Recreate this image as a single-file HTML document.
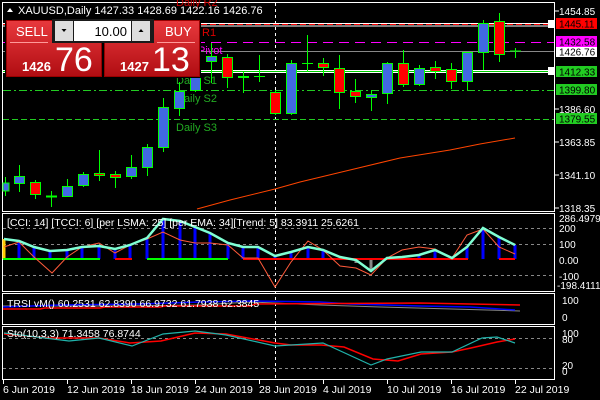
<!DOCTYPE html>
<html><head><meta charset="utf-8"><style>
html,body{margin:0;padding:0;background:#000;width:600px;height:400px;overflow:hidden}
svg{display:block;font-family:"Liberation Sans",sans-serif}
</style></head><body>
<svg width="600" height="400" viewBox="0 0 600 400" xmlns="http://www.w3.org/2000/svg">
<rect width="600" height="400" fill="#000"/>
<g fill="none" stroke="#fff" stroke-width="1">
<rect x="2.5" y="2.5" width="552" height="209"/>
<rect x="2.5" y="213.5" width="552" height="78"/>
<rect x="2.5" y="293.5" width="552" height="31"/>
<rect x="2.5" y="326.5" width="552" height="53"/>
</g>
<line x1="275.5" y1="3" x2="275.5" y2="380" stroke="#fff" stroke-dasharray="3,3"/>
<line x1="3" y1="23.5" x2="554" y2="23.5" stroke="#fff"/>
<line x1="3" y1="24.5" x2="554" y2="24.5" stroke="#f00" stroke-dasharray="6,3"/>
<line x1="3" y1="26" x2="554" y2="26" stroke="#fff"/>
<line x1="3" y1="42.5" x2="554" y2="42.5" stroke="#f0f" stroke-dasharray="10,6"/>
<line x1="3" y1="51.5" x2="554" y2="51.5" stroke="#888"/>
<line x1="3" y1="70.5" x2="554" y2="70.5" stroke="#fff"/>
<line x1="3" y1="71.5" x2="554" y2="71.5" stroke="#0c0"/>
<line x1="3" y1="72.5" x2="554" y2="72.5" stroke="#fff"/>
<line x1="3" y1="90.5" x2="554" y2="90.5" stroke="#2c2" stroke-dasharray="8,3,2,3"/>
<line x1="3" y1="119.5" x2="554" y2="119.5" stroke="#2c2" stroke-dasharray="6,3"/>
<g font-size="11">
<text x="176" y="6" fill="#c00">Daily R2</text>
<text x="202" y="36" fill="#d00">R1</text>
<text x="198" y="54" fill="#f0f">Pivot</text>
<text x="176" y="84" fill="#2a2">Daily S1</text>
<text x="176" y="102" fill="#2a2">Daily S2</text>
<text x="176" y="131" fill="#2a2">Daily S3</text>
</g>
<polyline fill="none" stroke="#ff4500" stroke-width="1" points="197,209 230,200 275,189 300,182 350,170 400,158 450,150 480,144 515,138"/>
<g stroke="#0f0" stroke-width="1">
<line x1="5.5" y1="177" x2="5.5" y2="196"/><rect x="3" y="183" width="6" height="8" fill="#4169e1"/>
<line x1="19.5" y1="165" x2="19.5" y2="192"/><rect x="14.5" y="176.5" width="10" height="7" fill="#4169e1"/>
<line x1="35.5" y1="180" x2="35.5" y2="199"/><rect x="30.5" y="182.5" width="10" height="12" fill="#f00"/>
<line x1="51.5" y1="191" x2="51.5" y2="207"/><line x1="46" y1="196.5" x2="57" y2="196.5" stroke-width="2"/>
<line x1="67.5" y1="179" x2="67.5" y2="197"/><rect x="62.5" y="186.5" width="10" height="10" fill="#4169e1"/>
<line x1="83.5" y1="172" x2="83.5" y2="187"/><rect x="78.5" y="174.5" width="10" height="11" fill="#4169e1"/>
<line x1="99.5" y1="150" x2="99.5" y2="181"/><rect x="94.5" y="173.5" width="10" height="2" fill="#f00"/>
<line x1="115.5" y1="171" x2="115.5" y2="188"/><rect x="110.5" y="174.5" width="10" height="3" fill="#f00"/>
<line x1="131.5" y1="155" x2="131.5" y2="179"/><rect x="126.5" y="167.5" width="10" height="9" fill="#4169e1"/>
<line x1="147.5" y1="144" x2="147.5" y2="176"/><rect x="142.5" y="147.5" width="10" height="20" fill="#4169e1"/>
<line x1="163.5" y1="98" x2="163.5" y2="152"/><rect x="158.5" y="107.5" width="10" height="40" fill="#4169e1"/>
<line x1="179.5" y1="82" x2="179.5" y2="116"/><rect x="174.5" y="91.5" width="10" height="17" fill="#4169e1"/>
<line x1="195.5" y1="58" x2="195.5" y2="92"/><rect x="190.5" y="65.5" width="10" height="25" fill="#4169e1"/>
<line x1="211.5" y1="43" x2="211.5" y2="83"/><rect x="206.5" y="56.5" width="10" height="5" fill="#4169e1"/>
<line x1="227.5" y1="54" x2="227.5" y2="88"/><rect x="222.5" y="57.5" width="10" height="20" fill="#f00"/>
<line x1="243.5" y1="72" x2="243.5" y2="93"/><line x1="238" y1="77" x2="249" y2="77" stroke-width="2"/>
<line x1="259.5" y1="55" x2="259.5" y2="82"/><line x1="254" y1="76.5" x2="265" y2="76.5"/>
<line x1="275.5" y1="90" x2="275.5" y2="115"/><rect x="270.5" y="92.5" width="10" height="21" fill="#f00"/>
<line x1="291.5" y1="60" x2="291.5" y2="115"/><rect x="286.5" y="63.5" width="10" height="50" fill="#4169e1"/>
<line x1="307.5" y1="35" x2="307.5" y2="72"/><line x1="302" y1="63.5" x2="313" y2="63.5"/>
<line x1="323.5" y1="58" x2="323.5" y2="76"/><rect x="318.5" y="63.5" width="10" height="4" fill="#f00"/>
<line x1="339.5" y1="55" x2="339.5" y2="109"/><rect x="334.5" y="68.5" width="10" height="24" fill="#f00"/>
<line x1="355.5" y1="79" x2="355.5" y2="103"/><rect x="350.5" y="91.5" width="10" height="5" fill="#f00"/>
<line x1="371.5" y1="90" x2="371.5" y2="111"/><rect x="366.5" y="94.5" width="10" height="3" fill="#4169e1"/>
<line x1="387.5" y1="62" x2="387.5" y2="104"/><rect x="382.5" y="63.5" width="10" height="30" fill="#4169e1"/>
<line x1="403.5" y1="50" x2="403.5" y2="87"/><rect x="398.5" y="63.5" width="10" height="21" fill="#f00"/>
<line x1="419.5" y1="65" x2="419.5" y2="86"/><rect x="414.5" y="68.5" width="10" height="16" fill="#4169e1"/>
<line x1="435.5" y1="61" x2="435.5" y2="79"/><rect x="430.5" y="67.5" width="10" height="4" fill="#f00"/>
<line x1="451.5" y1="63" x2="451.5" y2="89"/><rect x="446.5" y="69.5" width="10" height="12" fill="#f00"/>
<line x1="467.5" y1="52" x2="467.5" y2="90"/><rect x="462.5" y="52.5" width="10" height="29" fill="#4169e1"/>
<line x1="483.5" y1="20" x2="483.5" y2="70"/><rect x="478.5" y="23.5" width="10" height="29" fill="#4169e1"/>
<line x1="499.5" y1="13" x2="499.5" y2="62"/><rect x="494.5" y="21.5" width="10" height="33" fill="#f00"/>
<line x1="515.5" y1="48" x2="515.5" y2="58"/><line x1="510" y1="51" x2="521" y2="51"/>
</g>
<g font-size="10" fill="#fff">
<text x="559" y="15">1454.85</text>
<text x="559" y="113">1386.60</text>
<text x="559" y="146">1363.85</text>
<text x="559" y="179">1341.10</text>
<text x="559" y="212">1318.35</text>
</g>
<g stroke="#fff"><line x1="555" y1="11" x2="559" y2="11"/><line x1="555" y1="109" x2="559" y2="109"/><line x1="555" y1="142" x2="559" y2="142"/><line x1="555" y1="175" x2="559" y2="175"/><line x1="555" y1="208" x2="559" y2="208"/></g>
<rect x="556" y="18" width="41" height="11" fill="#f00"/><text x="559" y="27.5" font-size="10" fill="#000">1445.11</text>
<rect x="556" y="36" width="41" height="11" fill="#f0f"/><text x="559" y="45.5" font-size="10" fill="#000">1432.58</text>
<rect x="556" y="47" width="41" height="10" fill="#fff"/><text x="559" y="55.5" font-size="10" fill="#000">1426.76</text>
<rect x="556" y="66" width="41" height="11" fill="#2c2"/><text x="559" y="75.5" font-size="10" fill="#000">1412.33</text>
<rect x="556" y="84" width="41" height="11" fill="#2c2"/><text x="559" y="93.5" font-size="10" fill="#000">1399.80</text>
<rect x="556" y="113" width="41" height="11" fill="#2c2"/><text x="559" y="122.5" font-size="10" fill="#000">1379.55</text>
<rect x="548" y="20" width="6" height="8" fill="#fff"/><rect x="548" y="67" width="6" height="8" fill="#fff"/>
<g stroke="#888" stroke-dasharray="3,3"><line x1="3" y1="228.5" x2="554" y2="228.5"/><line x1="3" y1="244.5" x2="554" y2="244.5"/><line x1="3" y1="275.5" x2="554" y2="275.5"/></g>
<g stroke="#00f" stroke-width="3">
<line x1="19" y1="259" x2="19" y2="241"/><line x1="34" y1="259" x2="34" y2="247"/><line x1="50" y1="259" x2="50" y2="251"/><line x1="67" y1="259" x2="67" y2="250"/><line x1="82" y1="259" x2="82" y2="247"/><line x1="99" y1="259" x2="99" y2="246"/><line x1="115" y1="259" x2="115" y2="249"/><line x1="130" y1="259" x2="130" y2="245"/><line x1="147" y1="259" x2="147" y2="238"/><line x1="163" y1="259" x2="163" y2="219"/><line x1="180" y1="259" x2="180" y2="221"/><line x1="195" y1="259" x2="195" y2="227"/><line x1="210" y1="259" x2="210" y2="233"/><line x1="228" y1="259" x2="228" y2="243"/><line x1="243" y1="259" x2="243" y2="247"/><line x1="258" y1="259" x2="258" y2="247"/><line x1="275" y1="259" x2="275" y2="256"/><line x1="291" y1="259" x2="291" y2="252"/><line x1="308" y1="259" x2="308" y2="247"/><line x1="323" y1="259" x2="323" y2="250"/><line x1="387" y1="259" x2="387" y2="258"/><line x1="419" y1="259" x2="419" y2="255"/><line x1="435" y1="259" x2="435" y2="250"/><line x1="467" y1="259" x2="467" y2="247"/><line x1="483" y1="259" x2="483" y2="228"/><line x1="499" y1="259" x2="499" y2="237"/><line x1="515" y1="259" x2="515" y2="245"/>
</g>
<g stroke="#888" stroke-width="3"><line x1="356" y1="259" x2="356" y2="263"/><line x1="371" y1="259" x2="371" y2="271"/></g>
<line x1="4" y1="239" x2="4" y2="259" stroke="#fc0" stroke-width="3"/>
<g stroke-width="2"><line x1="3" y1="259" x2="100" y2="259" stroke="#0f0"/><line x1="147" y1="259" x2="228" y2="259" stroke="#0f0"/><line x1="115" y1="259" x2="132" y2="259" stroke="#f00"/><line x1="243" y1="259" x2="468" y2="259" stroke="#f00"/><line x1="499" y1="259" x2="515" y2="259" stroke="#f00"/></g>
<polyline fill="none" stroke="#ff5a3a" stroke-width="1" points="4,247 19,242 34,257 52,273 67,257 82,247 99,243 115,253 130,245 147,239 163,232 180,240 195,243 210,243 228,245 243,258 258,258 275,287 291,262 308,241 323,250 340,266 356,268 371,275 387,258 402,250 419,247 435,249 452,258 467,235 483,229 499,247 515,254"/>
<polyline fill="none" stroke="#7fffd4" stroke-width="2.5" points="4,239 19,241 34,247 50,251 67,250 82,247 99,246 115,249 130,245 147,238 163,219 180,221 195,227 210,233 228,243 243,247 258,247 275,256 291,252 308,247 323,250 340,257 356,260 371,271 387,258 402,257 419,255 435,250 452,258 467,247 483,228 499,237 515,245"/>
<text x="7" y="226" font-size="10.5" fill="#fff">[CCI: 14] [TCCI: 6] [per LSMA: 25] [per EMA: 34][Trend: 5]  83.3911 25.6261</text>
<g font-size="10" fill="#fff">
<text x="559" y="222">286.4979</text><text x="559" y="232">200</text><text x="559" y="248">100</text><text x="559" y="264">0.00</text><text x="559" y="280">-100</text><text x="557" y="289">-198.4111</text>
</g>
<polyline fill="none" stroke="#888" points="3,306 120,306 200,305 250,302 320,305 380,307 520,311"/>
<polyline fill="none" stroke="#00f" stroke-width="1.5" points="3,307 60,305 140,304 200,302 250,301 320,302 350,304 420,306 470,307 515,310"/>
<polyline fill="none" stroke="#f00" stroke-width="1.5" points="3,309 40,309 45,308 100,308 105,307 160,307 165,306 250,306 255,304 420,303 470,304 520,305"/>
<text x="7" y="307" font-size="10.5" fill="#fff">TRSI vM() 60.2531 62.8390 66.9732 61.7938 62.3845</text>
<g font-size="10" fill="#fff"><text x="562" y="304">100</text><text x="562" y="321">0</text></g>
<g stroke="#888" stroke-dasharray="3,3"><line x1="3" y1="338.5" x2="554" y2="338.5"/><line x1="3" y1="368.5" x2="554" y2="368.5"/></g>
<polyline fill="none" stroke="#f00" stroke-width="1.5" points="4,334 50,338 99,338 130,343 161,341 195,333 226,334 275,343 291,345 321,345 344,347 373,359 398,361 421,354 452,352 471,348 497,342 515,339"/>
<polyline fill="none" stroke="#20b2aa" stroke-width="1.2" points="4,333 69,341 99,338 132,346 163,334 195,331 226,335 275,346 323,343 371,365 387,359 421,352 452,352 482,338 497,337 515,343"/>
<text x="7" y="337" font-size="10.5" fill="#fff">Sto(10,3,3) 71.3458 76.8744</text>
<g font-size="10" fill="#fff"><text x="562" y="337">100</text><text x="562" y="343">80</text><text x="562" y="369">20</text><text x="562" y="375">0</text></g>
<g font-size="10.5" fill="#fff">
<text x="3" y="393">6 Jun 2019</text><text x="67" y="393">12 Jun 2019</text><text x="131" y="393">18 Jun 2019</text><text x="195" y="393">24 Jun 2019</text><text x="259" y="393">28 Jun 2019</text><text x="323" y="393">4 Jul 2019</text><text x="387" y="393">10 Jul 2019</text><text x="451" y="393">16 Jul 2019</text><text x="515" y="393">22 Jul 2019</text>
</g>
<g stroke="#fff"><line x1="3.5" y1="380" x2="3.5" y2="384"/><line x1="67.5" y1="380" x2="67.5" y2="384"/><line x1="131.5" y1="380" x2="131.5" y2="384"/><line x1="195.5" y1="380" x2="195.5" y2="384"/><line x1="259.5" y1="380" x2="259.5" y2="384"/><line x1="323.5" y1="380" x2="323.5" y2="384"/><line x1="387.5" y1="380" x2="387.5" y2="384"/><line x1="451.5" y1="380" x2="451.5" y2="384"/><line x1="515.5" y1="380" x2="515.5" y2="384"/></g>
<path d="M7,12 L10,8 L13,12 Z" fill="#fff"/>
<text x="18" y="14" font-size="11" fill="#fff">XAUUSD,Daily  1427.33 1428.69 1422.16 1426.76</text>
<defs><linearGradient id="rg" x1="0" y1="0" x2="0" y2="1"><stop offset="0" stop-color="#e8393d"/><stop offset="1" stop-color="#b00d12"/></linearGradient></defs>
<rect x="5" y="19" width="196" height="59" fill="#000"/>
<rect x="6.5" y="20.5" width="95" height="56" fill="url(#rg)" stroke="#900"/>
<rect x="104.5" y="20.5" width="95" height="56" fill="url(#rg)" stroke="#900"/>
<rect x="52" y="19" width="102" height="24" fill="#1a1a1a"/>
<rect x="55" y="21" width="18" height="20" fill="#ddd"/>
<rect x="74" y="21" width="57" height="20" fill="#fff"/>
<rect x="132" y="21" width="18" height="20" fill="#ddd"/>
<path d="M61.5,29 L66.5,29 L64,32 Z" fill="#000"/>
<path d="M138.5,32 L143.5,32 L141,29 Z" fill="#000"/>
<text x="127" y="36" font-size="13" fill="#000" text-anchor="end">10.00</text>
<line x1="10" y1="42.5" x2="48" y2="42.5" stroke="#f99"/>
<line x1="157" y1="42.5" x2="195" y2="42.5" stroke="#f99"/>
<text x="16" y="36" font-size="13" fill="#fff">SELL</text>
<text x="165" y="36" font-size="13" fill="#fff">BUY</text>
<text x="22" y="71" font-size="13" font-weight="bold" fill="#fff">1426</text>
<text x="55" y="71" font-size="34" fill="#fff">76</text>
<text x="120" y="71" font-size="13" font-weight="bold" fill="#fff">1427</text>
<text x="152" y="71" font-size="34" fill="#fff">13</text>
</svg>
</body></html>
